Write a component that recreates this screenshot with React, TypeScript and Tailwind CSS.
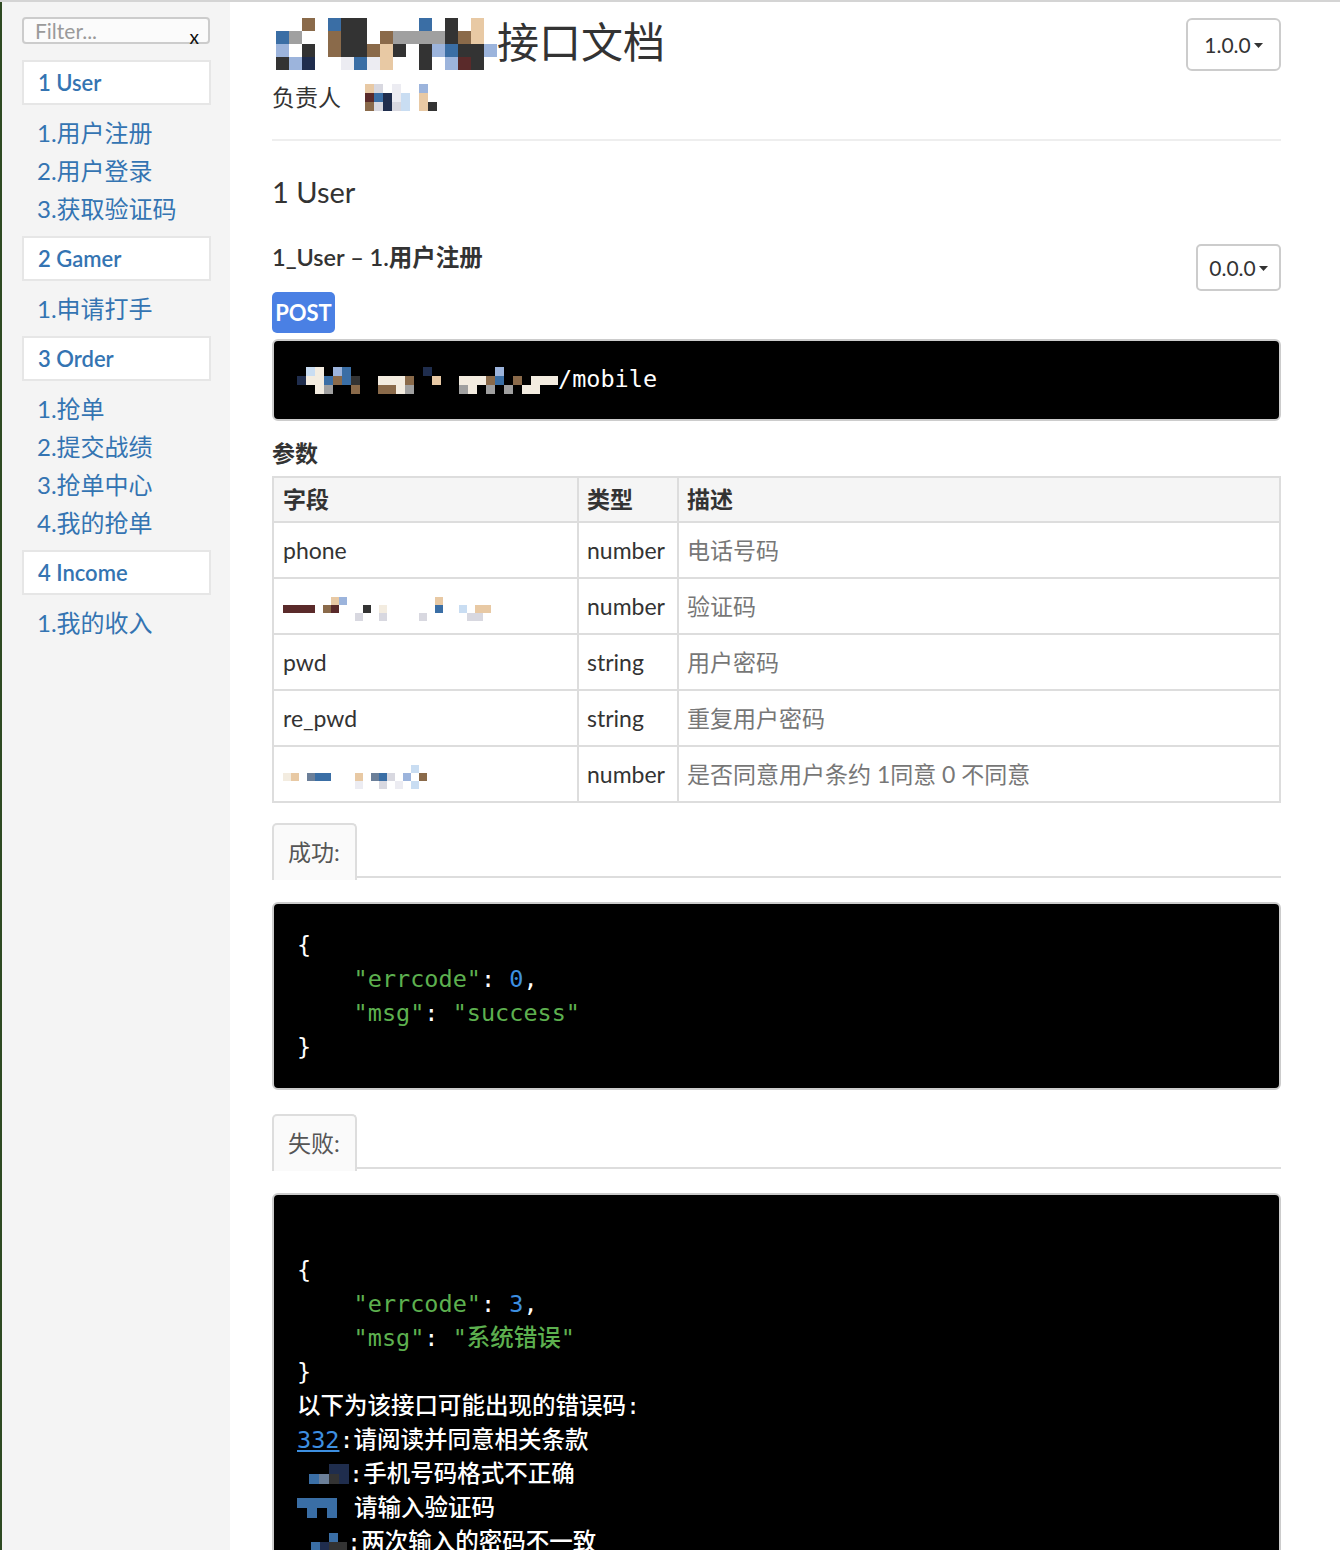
import React from 'react';

const PAL: Record<string, string> = {
  k: '#333333',
  d: '#1f2d4d',
  b: '#3a6ea5',
  l: '#9cb4dc',
  p: '#c9ddf2',
  n: '#8a6a4a',
  t: '#e8c9a4',
  w: '#f3ece0',
  g: '#a0a0a0',
  s: '#d8d8e0',
  r: '#5a2a2a',
  e: '#ececf2',
  m: '#6b7f99',
  y: '#777777',
};

function Mosaic({ rows, size, className }: { rows: string[]; size: number; className?: string }) {
  return (
    <span className={'inline-flex flex-col align-middle ' + (className ?? '')}>
      {rows.map((r, i) => (
        <span key={i} className="flex">
          {r.split('').map((c, j) => (
            <span key={j} style={{ width: size, height: size, background: PAL[c] ?? 'transparent' }} />
          ))}
        </span>
      ))}
    </span>
  );
}

const groups = [
  { title: '1 User', items: ['1.用户注册', '2.用户登录', '3.获取验证码'] },
  { title: '2 Gamer', items: ['1.申请打手'] },
  { title: '3 Order', items: ['1.抢单', '2.提交战绩', '3.抢单中心', '4.我的抢单'] },
  { title: '4 Income', items: ['1.我的收入'] },
];

const SANS = "font-['Lato','Noto_Sans_CJK_SC',sans-serif]";
const MONO = "font-['DejaVu_Sans_Mono','Noto_Sans_CJK_SC',monospace]";

function Caret() {
  return (
    <svg width="9" height="6" viewBox="0 0 9 6" className="ml-[3px] mt-[2px]">
      <path d="M0 0 L9 0 L4.5 5 Z" fill="#333" />
    </svg>
  );
}

function Tab({ label }: { label: string }) {
  return (
    <div className="flex h-[55px] border-b-2 border-[#ddd]">
      <div className="-mb-[2px] flex h-[57px] w-[85px] items-center rounded-t-[5px] border-2 border-b-0 border-[#ddd] bg-[#fafafa] pl-[14px] text-[23px] text-[#555]">
        {label}
      </div>
    </div>
  );
}

const G = 'text-[#5db04f]';
const B = 'text-[#3d8fe0]';

export default function App() {
  return (
    <div className={`flex min-h-[1550px] border-t-2 border-[#d4d4d4] ${SANS}`}>
      <div className="w-[2px] shrink-0 bg-[#2e4a22]" />
      <aside className="w-[228px] shrink-0 bg-[#f4f4f4] pl-[20px] pt-[15px]">
        <div className="relative h-[27px] w-[188px] overflow-visible rounded-[4px] border-2 border-[#ccc] bg-[#fbfbfb]">
          <span className="absolute left-[11px] top-[-2px] text-[21px] leading-[27px] text-[#9a9a9a]">Filter...</span>
          <span className="absolute right-[9px] top-[9px] text-[19px] leading-[18px] text-[#111]">x</span>
        </div>
        {groups.map((g) => (
          <div key={g.title}>
            <div className="mt-[16px] flex h-[45px] w-[189px] items-center border-2 border-[#e6e6e6] bg-white pl-[14px] text-[22px] font-semibold text-[#3474b2]">
              {g.title}
            </div>
            <div className="mb-[-8px] mt-[9px]">
              {g.items.map((it) => (
                <div key={it} className="h-[38px] pl-[15px] text-[24px] leading-[38px] text-[#3474b2]">
                  {it}
                </div>
              ))}
            </div>
          </div>
        ))}
      </aside>

      <main className="min-w-0 flex-1 pl-[42px] pr-[59px] pt-[16px] text-[#333]">
        <div className="flex items-start justify-between">
          <div>
            <h1 className="flex h-[48px] items-center text-[42px] leading-[48px] text-[#333]">
              <Mosaic
                size={13}
                className="ml-[4px] mt-[4px]"
                rows={[
                  '..n.bkk....b.k.t.',
                  'bg..nkk.nggggknt.',
                  'l.k.nkkntk.klbkkl',
                  'kld..ebet..k.lrk.',
                ]}
              />
              <span>接口文档</span>
            </h1>
            <div className="mt-[16px] flex h-[30px] items-center text-[23px] leading-[30px]">
              <span>负责人</span>
              <Mosaic size={9} className="ml-[24px]" rows={['ts.e..l.', 'rbdep.t.', 'nsdsp.tk']} />
            </div>
          </div>
          <button className="flex h-[53px] w-[95px] items-center justify-center rounded-[6px] border-2 border-[#ccc] bg-white text-[21px] text-[#333]">
            1.0.0
            <Caret />
          </button>
        </div>

        <div className="mt-[27px] border-t-2 border-[#eee]" />

        <h2 className="mt-[33px] h-[36px] text-[29px] leading-[36px] text-[#333]">1 User</h2>

        <div className="mt-[32px] flex items-start justify-between">
          <div className="h-[30px] text-[23.5px] font-semibold leading-[30px] text-[#333]">1_User – 1.用户注册</div>
          <button className="mt-[2px] flex h-[47px] w-[85px] items-center justify-center rounded-[5px] border-2 border-[#ccc] bg-white text-[21px] text-[#333]">
            0.0.0
            <Caret />
          </button>
        </div>

        <div className="mt-[1px] flex h-[41px] w-[63px] items-center justify-center rounded-[5px] bg-[#4a80e4] text-[22px] font-bold text-white">
          POST
        </div>

        <div className={`mt-[6px] flex h-[82px] items-center rounded-[6px] border-2 border-[#ccc] bg-black px-[23px] text-[23.5px] text-white ${MONO}`}>
          <Mosaic
            size={9}
            rows={[
              '.pw.lb........d.......l......',
              'dwwbnbk..wwwn..t..wwwnb.n.www',
              '..wg..n..nnwg.....gw.g.g.ww..',
            ]}
          />
          <span>/mobile</span>
        </div>

        <div className="mt-[17px] h-[30px] text-[23px] font-bold leading-[30px]">参数</div>

        <table className="mt-[8px] w-full border-collapse text-[23px]">
          <thead>
            <tr className="h-[45px] bg-[#f5f5f5]">
              <th className="w-[305px] border-2 border-[#ddd] px-[9px] text-left font-bold">字段</th>
              <th className="w-[100px] border-2 border-[#ddd] px-[8px] text-left font-bold">类型</th>
              <th className="border-2 border-[#ddd] px-[8px] text-left font-bold">描述</th>
            </tr>
          </thead>
          <tbody>
            {[
              { f: 'phone', t: 'number', d: '电话号码' },
              { f: null as string | null, m: ['......tl...........t......', 'rrrr.nr...k.w......b..p.tt', '.........s..s....s.....ss.'], t: 'number', d: '验证码' },
              { f: 'pwd', t: 'string', d: '用户密码' },
              { f: 're_pwd', t: 'string', d: '重复用户密码' },
              { f: null, m: ['................p...', 'wt.mbb...t.mbs.l.n..', '.........e..s.e.p...'], t: 'number', d: '是否同意用户条约 1同意 0 不同意' },
            ].map((r, i) => (
              <tr key={i} className="h-[56px]">
                <td className="border-2 border-[#ddd] px-[9px] text-[#333]">
                  {r.f ? r.f : <Mosaic size={8} rows={(r as { m: string[] }).m} />}
                </td>
                <td className="border-2 border-[#ddd] px-[8px] text-[#333]">{r.t}</td>
                <td className="border-2 border-[#ddd] px-[8px] text-[#777]">{r.d}</td>
              </tr>
            ))}
          </tbody>
        </table>

        <div className="mt-[20px]">
          <Tab label="成功:" />
        </div>

        <pre className={`mt-[24px] rounded-[6px] border-2 border-[#ccc] bg-black px-[23px] py-[24px] text-[23.5px] font-medium leading-[34px] text-white ${MONO}`}>
          <div>{'{'}</div>
          <div>
            {'    '}
            <span className={G}>"errcode"</span>: <span className={B}>0</span>,
          </div>
          <div>
            {'    '}
            <span className={G}>"msg"</span>: <span className={G}>"success"</span>
          </div>
          <div>{'}'}</div>
        </pre>

        <div className="mt-[24px]">
          <Tab label="失败:" />
        </div>

        <pre className={`mt-[24px] rounded-[6px] border-2 border-[#ccc] bg-black px-[23px] py-[24px] text-[23.5px] font-medium leading-[34px] text-white ${MONO}`}>
          <div>&nbsp;</div>
          <div>{'{'}</div>
          <div>
            {'    '}
            <span className={G}>"errcode"</span>: <span className={B}>3</span>,
          </div>
          <div>
            {'    '}
            <span className={G}>"msg"</span>: <span className={G}>"系统错误"</span>
          </div>
          <div>{'}'}</div>
          <div>以下为该接口可能出现的错误码:</div>
          <div>
            <span className="text-[#3d8fe0] underline">332</span>:请阅读并同意相关条款
          </div>
          <div className="flex items-center">
            <span className="inline-block w-[12px]" />
            <Mosaic size={10} rows={['..dd', 'bmkd']} />
            <span>:手机号码格式不正确</span>
          </div>
          <div className="flex items-center">
            <Mosaic size={10} rows={['bbbb.', '.b.b.']} />
            <span className="inline-block w-[7px]" />
            <span>请输入验证码</span>
          </div>
          <div className="flex items-center">
            <span className="inline-block w-[5px]" />
            <Mosaic size={9} rows={['...b.', '.bdkk']} />
            <span>:两次输入的密码不一致</span>
          </div>
          <div>
            <span className="text-[#3d8fe0] underline">335</span>:验证码错误
          </div>
          <div>
            <span className="text-[#3d8fe0] underline">336</span>:该手机号已注册
          </div>
        </pre>
      </main>
    </div>
  );
}
